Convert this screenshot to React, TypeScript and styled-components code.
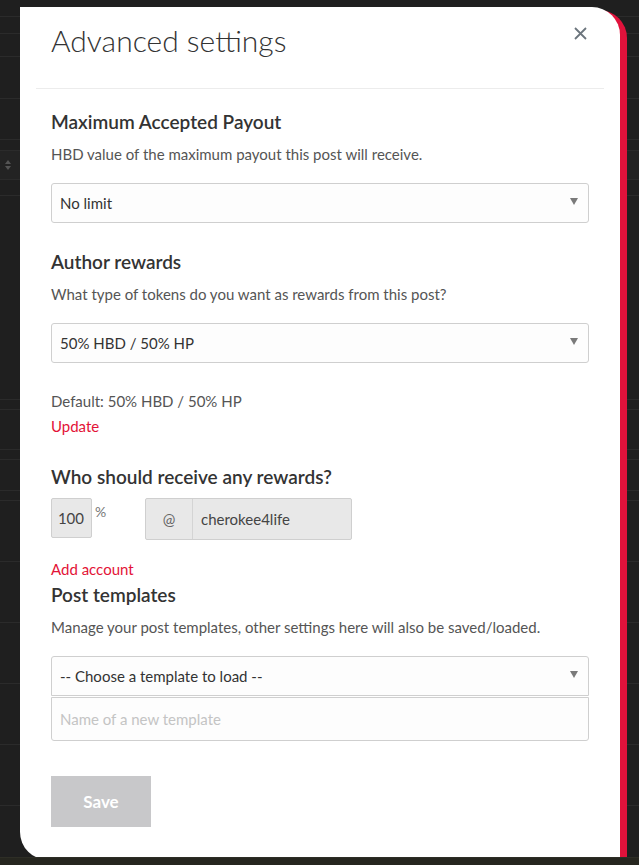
import React from 'react';
import styled, { createGlobalStyle } from 'styled-components';

const GlobalStyle = createGlobalStyle`
  html, body {
    margin: 0;
    padding: 0;
    background: #1f1f1f;
  }
  body {
    font-family: "Source Sans Pro", Lato, "Noto Sans", sans-serif;
    overflow: hidden;
  }
`;

const Page = styled.div`
  position: relative;
  width: 639px;
  height: 865px;
  overflow: hidden;
  display: flex;
  flex-direction: column;
`;

// the editor page sitting behind the overlay
const Backdrop = styled.div`
  flex: 1;
  display: flex;
  flex-direction: column;
`;

const BackdropRow = styled.div<{ $h: number; $shade?: boolean }>`
  height: ${(p) => p.$h}px;
  flex-shrink: 0;
  border-bottom: 1px solid #2b2b2b;
  background: ${(p) => (p.$shade ? '#232323' : 'transparent')};
  display: flex;
  align-items: center;
  padding-left: 4px;
  color: #555;
`;

const BottomBar = styled.div`
  position: relative;
  z-index: 2;
  height: 7px;
  flex-shrink: 0;
  background: #26261f;
  border-top: 1px solid #2e2e26;
`;

const Modal = styled.div`
  position: absolute;
  top: 7px;
  left: 20px;
  width: 600px;
  height: 853px;
  background: #fff;
  border-radius: 0 28px 0 28px;
  box-shadow: 7px 3px 0 #e0123b;
  display: flex;
  flex-direction: column;
`;

const Header = styled.div`
  position: relative;
  margin: 0 16px;
  padding: 15px 15px 30px;
  border-bottom: 1px solid #ececec;
`;

const Title = styled.h1`
  margin: 0;
  font-size: 30px;
  line-height: 36px;
  font-weight: 300;
  color: #333;
`;

const CloseButton = styled.button`
  position: absolute;
  top: 17px;
  right: 15px;
  width: 18px;
  height: 18px;
  padding: 0;
  border: 0;
  background: none;
  color: #6c757d;
  display: flex;
  align-items: center;
  justify-content: center;
`;

const Body = styled.div`
  padding: 21px 31px 0;
  display: flex;
  flex-direction: column;
`;

const SectionTitle = styled.h3<{ $top?: number }>`
  margin: ${(p) => p.$top ?? 0}px 0 0;
  font-size: 19px;
  line-height: 24px;
  font-weight: 600;
  color: #333;
`;

const Hint = styled.p<{ $top?: number }>`
  margin: ${(p) => p.$top ?? 10}px 0 0;
  font-size: 15px;
  line-height: 20px;
  color: #555;
`;

const SelectBox = styled.div<{ $top?: number; $joined?: boolean }>`
  margin-top: ${(p) => p.$top ?? 19}px;
  height: 40px;
  box-sizing: border-box;
  border: 1px solid #cfcfcf;
  border-radius: ${(p) => (p.$joined ? '3px 3px 0 0' : '3px')};
  background: #fdfdfd;
  display: flex;
  align-items: center;
  justify-content: space-between;
  padding: 0 10px 0 8px;
  font-size: 15px;
  color: #333;
`;

const Caret = styled.span`
  width: 0;
  height: 0;
  border-left: 4px solid transparent;
  border-right: 4px solid transparent;
  border-top: 7px solid #7a7a7a;
  margin-top: -3px;
`;

const TextLine = styled.div<{ $red?: boolean; $top?: number }>`
  margin-top: ${(p) => p.$top ?? 0}px;
  font-size: 15px;
  line-height: 25px;
  color: ${(p) => (p.$red ? '#e31337' : '#555')};
`;

const BeneficiaryRow = styled.div`
  margin-top: 9px;
  display: flex;
  align-items: flex-start;
`;

const PercentField = styled.div`
  width: 41px;
  height: 40px;
  box-sizing: border-box;
  border: 1px solid #cfcfcf;
  border-radius: 2px;
  background: #e8e8e8;
  display: flex;
  align-items: center;
  justify-content: flex-end;
  padding-right: 7px;
  font-size: 15px;
  color: #444;
`;

const PercentSign = styled.span`
  margin: 7px 0 0 3px;
  font-size: 14px;
  line-height: 14px;
  color: #777;
  width: 50px;
`;

const AccountGroup = styled.div`
  width: 207px;
  height: 42px;
  box-sizing: border-box;
  border: 1px solid #cfcfcf;
  border-radius: 2px;
  background: #e8e8e8;
  display: flex;
`;

const AtAddon = styled.span`
  width: 46px;
  flex-shrink: 0;
  border-right: 1px solid #d4d4d4;
  display: flex;
  align-items: center;
  justify-content: center;
  font-size: 15px;
  color: #666;
`;

const AccountName = styled.span`
  flex: 1;
  display: flex;
  align-items: center;
  padding-left: 8px;
  font-size: 15px;
  color: #444;
`;

const NameInput = styled.div`
  margin-top: 1px;
  height: 44px;
  box-sizing: border-box;
  border: 1px solid #cfcfcf;
  border-radius: 0 0 3px 3px;
  background: #fdfdfd;
  display: flex;
  align-items: center;
  padding-left: 8px;
  font-size: 15px;
  color: #c4c4c4;
`;

const SaveButton = styled.button`
  margin-top: 35px;
  width: 100px;
  height: 51px;
  border: 0;
  border-radius: 0;
  background: #c8c8ca;
  color: #fff;
  font-family: inherit;
  font-size: 17px;
  font-weight: 700;
`;

const backdropRows = [16, 16, 22, 41, 40, 10, 28, 15, 203, 9, 39, 9, 30, 9, 60, 60, 60, 60, 60];

const App: React.FC = () => {
  return (
    <Page>
      <GlobalStyle />
      <Backdrop>
        {backdropRows.map((h, i) => (
          <BackdropRow key={i} $h={h} $shade={i === 6}>
            {i === 6 && (
              <svg width="8" height="12" viewBox="0 0 8 12">
                <path d="M4 1 L7 5 H1 Z M4 11 L7 7 H1 Z" fill="#555" />
              </svg>
            )}
          </BackdropRow>
        ))}
      </Backdrop>
      <BottomBar />

      <Modal>
        <Header>
          <Title>Advanced settings</Title>
          <CloseButton aria-label="Close">
            <svg width="13" height="13" viewBox="0 0 13 13">
              <path d="M1 1 L12 12 M12 1 L1 12" stroke="currentColor" strokeWidth="1.8" />
            </svg>
          </CloseButton>
        </Header>

        <Body>
          <SectionTitle>Maximum Accepted Payout</SectionTitle>
          <Hint>HBD value of the maximum payout this post will receive.</Hint>
          <SelectBox>
            No limit
            <Caret />
          </SelectBox>

          <SectionTitle $top={27}>Author rewards</SectionTitle>
          <Hint>What type of tokens do you want as rewards from this post?</Hint>
          <SelectBox>
            50% HBD / 50% HP
            <Caret />
          </SelectBox>

          <TextLine $top={26}>Default: 50% HBD / 50% HP</TextLine>
          <TextLine $red>Update</TextLine>

          <SectionTitle $top={26}>Who should receive any rewards?</SectionTitle>
          <BeneficiaryRow>
            <PercentField>100</PercentField>
            <PercentSign>%</PercentSign>
            <AccountGroup>
              <AtAddon>@</AtAddon>
              <AccountName>cherokee4life</AccountName>
            </AccountGroup>
          </BeneficiaryRow>
          <TextLine $red $top={17}>Add account</TextLine>

          <SectionTitle $top={1}>Post templates</SectionTitle>
          <Hint $top={10}>Manage your post templates, other settings here will also be saved/loaded.</Hint>
          <SelectBox $joined>
            -- Choose a template to load --
            <Caret />
          </SelectBox>
          <NameInput>Name of a new template</NameInput>

          <div>
            <SaveButton>Save</SaveButton>
          </div>
        </Body>
      </Modal>
    </Page>
  );
};

export default App;
